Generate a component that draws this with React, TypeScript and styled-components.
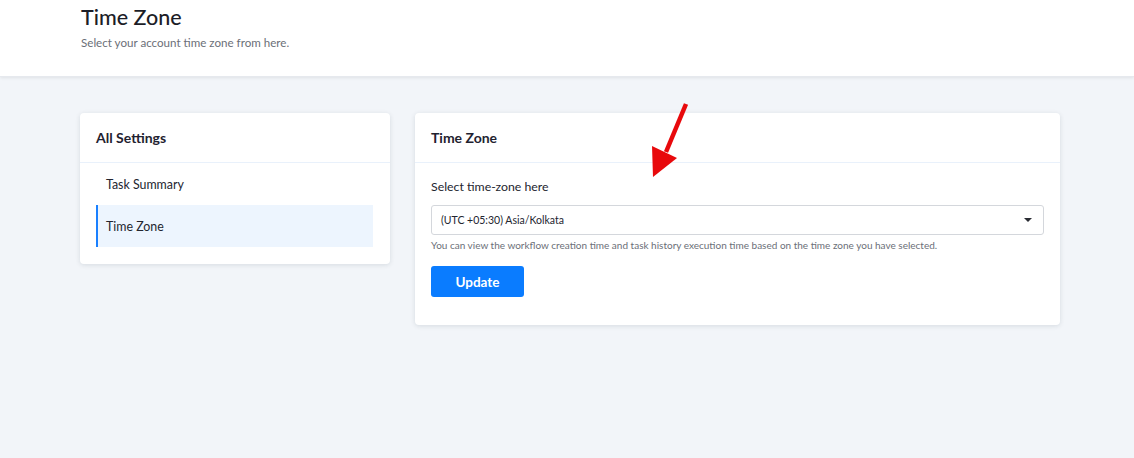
import React from 'react'
import styled, { createGlobalStyle } from 'styled-components'

const GlobalStyle = createGlobalStyle`
  html, body {
    margin: 0;
    padding: 0;
    background: #f2f5f9;
    font-family: Lato, "Noto Sans", Arial, sans-serif;
    color: #1f2230;
  }
  * { box-sizing: border-box; }
`

const Page = styled.div`
  min-height: 458px;
  background: #f2f5f9;
`

const TopBar = styled.header`
  height: 77px;
  background: #fff;
  padding: 4px 81px 0;
  box-shadow: 0 1px 3px rgba(0, 0, 0, 0.08);
  border-bottom: 1px solid #e6e9ee;
`

const PageTitle = styled.h1`
  margin: 0;
  font-size: 21.5px;
  line-height: 26px;
  font-weight: 500;
  color: #1c1d27;
`

const PageSubtitle = styled.p`
  margin: 6px 0 0;
  font-size: 11.6px;
  line-height: 14px;
  color: #6b6f78;
`

const Content = styled.main`
  display: flex;
  align-items: flex-start;
  gap: 25px;
  padding: 36px 0 0 80px;
`

const Card = styled.section<{ $width: number }>`
  position: relative;
  width: ${p => p.$width}px;
  background: #fff;
  border-radius: 4px;
  box-shadow: 0 1px 5px rgba(20, 30, 50, 0.12);
`

const CardHeader = styled.div`
  height: 50px;
  display: flex;
  align-items: center;
  padding: 0 16px;
  border-bottom: 1px solid #e9f1fb;
  font-size: 14px;
  font-weight: 700;
  color: #1f2230;
`

const Menu = styled.nav`
  display: flex;
  flex-direction: column;
  padding: 0 17px 17px 16px;
`

const MenuItem = styled.div<{ $active?: boolean }>`
  height: 42px;
  display: flex;
  align-items: center;
  padding-left: ${p => (p.$active ? 8 : 10)}px;
  font-size: 12.4px;
  color: #23252f;
  background: ${p => (p.$active ? '#edf5fe' : 'transparent')};
  border-left: ${p => (p.$active ? '2px solid #1a80ff' : 'none')};
`

const CardBody = styled.div`
  display: flex;
  flex-direction: column;
  align-items: flex-start;
  padding: 16px 16px 28px 16px;
`

const FieldLabel = styled.label`
  font-size: 12.3px;
  line-height: 16px;
  color: #23252f;
`

const SelectBox = styled.div`
  margin-top: 10px;
  width: 100%;
  height: 30px;
  display: flex;
  align-items: center;
  justify-content: space-between;
  padding: 0 11px 0 9px;
  border: 1px solid #d4d7dc;
  border-radius: 3px;
  font-size: 10.5px;
  color: #23252f;
`

const Caret = styled.span`
  width: 0;
  height: 0;
  border-left: 4px solid transparent;
  border-right: 4px solid transparent;
  border-top: 4px solid #2a2c33;
`

const HelpText = styled.p`
  margin: 3px 0 0;
  font-size: 10px;
  line-height: 14px;
  color: #6b6f78;
`

const PrimaryButton = styled.button`
  margin-top: 14px;
  width: 93px;
  height: 31px;
  border: none;
  border-radius: 3px;
  background: #0a7cff;
  color: #fff;
  font-family: inherit;
  font-size: 13.5px;
  font-weight: 700;
  cursor: pointer;
`

// red pointer arrow drawn over the card
const Pointer = styled.svg`
  position: absolute;
  left: 225px;
  top: -13px;
  width: 50px;
  height: 80px;
`

const App = () => {
  return (
    <Page>
      <GlobalStyle />
      <TopBar>
        <PageTitle>Time Zone</PageTitle>
        <PageSubtitle>Select your account time zone from here.</PageSubtitle>
      </TopBar>
      <Content>
        <Card $width={310}>
          <CardHeader>All Settings</CardHeader>
          <Menu>
            <MenuItem>Task Summary</MenuItem>
            <MenuItem $active>Time Zone</MenuItem>
          </Menu>
        </Card>
        <Card $width={645}>
          <CardHeader>Time Zone</CardHeader>
          <CardBody>
            <FieldLabel>Select time-zone here</FieldLabel>
            <SelectBox>
              <span>(UTC +05:30) Asia/Kolkata</span>
              <Caret />
            </SelectBox>
            <HelpText>
              You can view the workflow creation time and task history execution time based on the time zone you have selected.
            </HelpText>
            <PrimaryButton>Update</PrimaryButton>
          </CardBody>
          <Pointer viewBox="0 0 50 80">
            <line x1="46" y1="4" x2="26" y2="52" stroke="#e8090c" strokeWidth="4.5" />
            <polygon points="12,46 37,58 13,77" fill="#e8090c" />
          </Pointer>
        </Card>
      </Content>
    </Page>
  )
}

export default App
